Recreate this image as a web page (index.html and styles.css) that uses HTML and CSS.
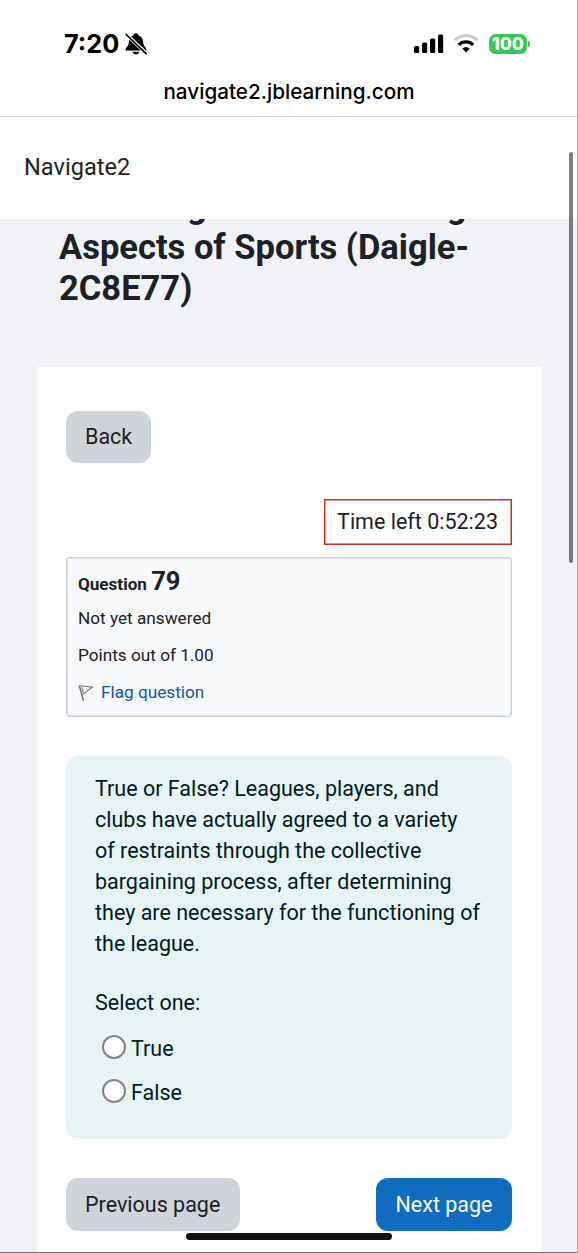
FILE: index.html
```html
<!DOCTYPE html>
<html lang="en">
<head>
<meta charset="utf-8">
<title>Navigate2</title>
<link rel="stylesheet" href="styles.css">
</head>
<body>
<div class="phone">
  <header class="status">
    <div class="status-left">
      <span class="time">7:20</span>
      <svg class="bell" width="22" height="22" viewBox="0 0 22 22">
        <path d="M.5 17.600C.6 14.200 3.600 13.500 3.800 9.500C4 5.500 6 3.300 8.400 2.500C8.700 1 9.700.3 11 .3S13.300 1 13.600 2.500C16 3.300 18 5.500 18.200 9.500C18.400 13.500 21.400 14.200 21.500 17.600Z"/>
        <path d="M7.500 18.700H14.500C14 20.500 12.700 21.500 11 21.500S8 20.500 7.500 18.700Z"/>
        <path d="M.5 .5L22 21.200" stroke="#fff" stroke-width="3.600"/>
        <path d="M1.200 1.500L21 20.600" stroke="#000" stroke-width="1.700" stroke-linecap="round"/>
      </svg>
    </div>
    <div class="status-right">
      <svg width="30" height="20" viewBox="0 0 30 20">
        <rect x="0" y="12" width="5.200" height="7" rx="1.500"/>
        <rect x="8" y="8.500" width="5.200" height="10.500" rx="1.500"/>
        <rect x="16" y="4.500" width="5.200" height="14.500" rx="1.500"/>
        <rect x="24" y="0.500" width="5.200" height="18.500" rx="1.500"/>
      </svg>
      <svg class="wifi" width="26" height="20" viewBox="0 0 26 20">
        <g fill="none" stroke-width="3.200">
          <path d="M1.800 6.200A16.200 16.200 0 0 1 24.200 6.200" stroke="#ccc"/>
          <path d="M5.800 10.800A10.400 10.400 0 0 1 20.200 10.800" stroke="#000"/>
        </g>
        <path d="M9.300 14.600A5.600 5.600 0 0 1 16.700 14.600L13 18.400Z"/>
      </svg>
      <span class="battery">100</span><span class="battery-tip"></span>
    </div>
  </header>
  <div class="address">navigate2.jblearning.com</div>
  <nav class="navbar">Navigate2</nav>
  <div class="heading">
    <div class="clipped"><span>g</span><span>g</span></div>
    <h1>Aspects of Sports (Daigle-<br>2C8E77)</h1>
  </div>
  <main class="card">
    <button class="btn back">Back</button>
    <div class="timer">Time left 0:52:23</div>
    <section class="info">
      <h2>Question <span>79</span></h2>
      <p>Not yet answered</p>
      <p>Points out of 1.00</p>
      <a class="flag">
        <svg width="16" height="18" viewBox="0 0 16 18" fill="none" stroke="#777">
          <path d="M1.200 1.500L5.600 17" stroke-width="1.500"/>
          <path d="M1.500 1.800L14.300 3.200L4.500 10.500M3.800 3.200L5.200 8.600" stroke-width="1.100"/>
        </svg>Flag question</a>
    </section>
    <section class="question">
      <p class="prompt">True or False? Leagues, players, and<br>clubs have actually agreed to a variety<br>of restraints through the collective<br>bargaining process, after determining<br>they are necessary for the functioning of<br>the league.</p>
      <p class="select">Select one:</p>
      <label class="option"><i class="radio"></i><span>True</span></label>
      <label class="option"><i class="radio"></i><span>False</span></label>
    </section>
    <div class="actions">
      <button class="btn">Previous page</button>
      <button class="btn primary">Next page</button>
    </div>
  </main>
  <div class="scrollbar"></div>
  <div class="home"></div>
</div>
</body>
</html>
```

FILE: styles.css
```css
* { box-sizing: border-box; }
body { margin: 0; background: #fff; }
h1, h2, p { margin: 0; }
.phone {
  position: relative;
  display: flex;
  flex-direction: column;
  width: 578px;
  height: 1253px;
  overflow: hidden;
  background: #f0f2f7;
  color: #1d2125;
  font: 21.5px/31px Roboto, sans-serif;
}
.phone::after {
  content: "";
  position: absolute;
  inset: 0;
  border-right: 1px solid #a5a5a7;
  border-bottom: 1px solid #6e6e70;
}
.status {
  flex: none;
  display: flex;
  justify-content: space-between;
  height: 72px;
  padding: 32px 48px 0 64px;
  background: #fff;
  color: #000;
  font-family: Inter, sans-serif;
}
.status-left, .status-right { display: flex; height: 23px; align-items: center; }
.time { font-size: 25.3px; font-weight: 700; }
.bell { margin-left: 6px; }
.wifi { margin: 0 10px 0 10px; }
.status-right svg:first-child { position: relative; left: 1px; }
.battery {
  width: 38px;
  height: 20px;
  border-radius: 6.5px;
  background: #34c759;
  color: #fff;
  font-size: 17.5px;
  font-weight: 800;
  line-height: 20px;
  text-align: center;
}
.battery-tip { width: 2px; height: 6px; margin-left: 1px; border-radius: 0 2px 2px 0; background: #34c759; }
.address {
  flex: none;
  height: 45px;
  border-bottom: 1px solid #d4d4d6;
  background: #fff;
  color: #000;
  font: 550 20.7px/40px Inter, sans-serif;
  text-align: center;
}
.navbar {
  flex: none;
  height: 102px;
  padding: 35px 24px 0;
  background: #fff;
  font-size: 23.6px;
}
.heading {
  flex: none;
  height: 148px;
  padding-left: 59px;
  overflow: hidden;
  font-size: 34.5px;
  font-weight: 700;
  line-height: 41px;
}
.clipped { display: flex; gap: 240px; height: 41px; margin-top: -33.5px; padding-left: 128px; }
h1 { font-size: inherit; font-weight: inherit; }
.card {
  flex: none;
  display: flex;
  flex-direction: column;
  align-items: flex-start;
  width: 504px;
  height: 900px;
  margin-left: 37px;
  padding: 44px 29px 0;
  background: #fff;
}
.btn {
  height: 52px;
  padding: 0 19px;
  border: 0;
  border-radius: 12px;
  background: #ced4da;
  color: #1d2125;
  font: inherit;
}
.back { padding-bottom: 1px; }
.primary { background: #0f6cbf; color: #fff; }
.timer {
  align-self: flex-end;
  height: 46px;
  margin-top: 36px;
  padding: 6px 13px 0 12px;
  border: 1px solid #ca3120;
  box-shadow: inset 0 0 0 0.5px #ca3120;
}
.info {
  width: 446px;
  height: 160px;
  margin-top: 12px;
  padding: 9px 11px;
  border: 1px solid #cad0d7;
  border-radius: 3px;
  box-shadow: inset 0 0 0 0.5px #cad0d7;
  background: #f8f9fa;
  font-size: 17.2px;
}
.info h2 { margin-bottom: 4px; font-size: 17.1px; line-height: 29px; }
.info h2 span { font-size: 25.5px; }
.info p { height: 37px; line-height: 31px; }
.flag { display: flex; align-items: center; gap: 7px; color: #0f589d; }
.question {
  width: 446px;
  height: 383px;
  margin-top: 39px;
  padding: 17px 29px;
  border-radius: 12px;
  background: #e7f3f5;
  color: #001a1e;
}
.prompt { white-space: nowrap; }
.select { margin: 28px 0 13px; }
.option { display: flex; align-items: center; height: 31px; margin: 0 0 13px 7px; }
.option span { padding-top: 3px; }
.radio { width: 24px; height: 24px; margin-right: 5px; border: 2px solid #858389; border-radius: 50%; background: #fff; }
.actions { display: flex; justify-content: space-between; width: 100%; margin-top: 39px; }
.actions .btn { height: 53px; padding: 0 19.5px 1px 19px; }
.scrollbar { position: absolute; left: 569px; top: 152px; width: 4px; height: 411px; border-radius: 2px; background: #7c7c7f; }
.home { position: absolute; left: 186px; top: 1233px; width: 206px; height: 7px; border-radius: 4px; background: #111; }
```
